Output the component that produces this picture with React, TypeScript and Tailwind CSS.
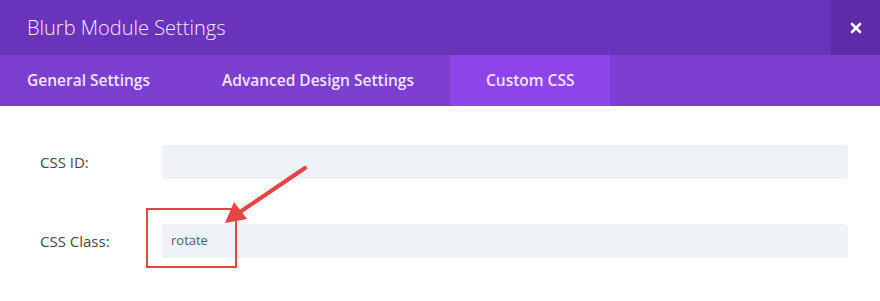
export default function App() {
  const font = { fontFamily: '"Open Sans", "Liberation Sans", sans-serif' };
  return (
    <div className="relative w-[880px] h-[301px] bg-white overflow-hidden" style={font}>
      {/* Title bar */}
      <div className="flex items-center h-[55px] bg-[#6933bb]">
        <div className="flex-1 pl-[27px] text-[20px] font-light text-[#f3ecff]">Blurb Module Settings</div>
        <button className="flex items-center justify-center w-[49px] h-[55px] bg-[#5f2ba9]">
          <svg width="12" height="12" viewBox="0 0 12 12">
            <path d="M2 2l8 8M10 2l-8 8" stroke="#ffffff" strokeWidth="2.6" strokeLinecap="round" />
          </svg>
        </button>
      </div>
      {/* Tabs */}
      <div className="flex h-[51px] bg-[#7c3fd0]">
        <div className="flex items-center pl-[27px] pr-[36px] text-[15.5px] font-semibold text-[#f3e4ff]">General Settings</div>
        <div className="flex items-center px-[36px] text-[15.5px] font-semibold text-[#f3e4ff]">Advanced Design Settings</div>
        <div className="flex items-center px-[36px] text-[15.5px] font-semibold text-[#f3e4ff] bg-[#8d45ea]">Custom CSS</div>
      </div>
      {/* Fields */}
      <div className="pt-[39px] pl-[40px] pr-[32px]">
        <div className="flex items-center h-[34px]">
          <div className="w-[122px] text-[15px] text-[#3f4852]">CSS ID:</div>
          <div className="flex-1 h-[34px] bg-[#eff3f7] rounded-[2px]" />
        </div>
        <div className="flex items-center h-[34px] mt-[45px]">
          <div className="w-[122px] text-[15px] text-[#3f4852]">CSS Class:</div>
          <div className="flex-1 h-[34px] bg-[#eff3f7] rounded-[2px] flex items-center pl-[9px] text-[13px] text-[#555c63]">rotate</div>
        </div>
      </div>
      {/* Annotation */}
      <div className="absolute left-[146px] top-[208px] w-[91px] h-[60px] border-2 border-[#e64545]" />
      <svg className="absolute left-0 top-0" width="880" height="301" viewBox="0 0 880 301">
        <line x1="305" y1="168" x2="240" y2="212" stroke="#e64545" strokeWidth="4" strokeLinecap="round" />
        <polygon points="225,223 234,202 247,219" fill="#e64545" />
      </svg>
    </div>
  );
}
